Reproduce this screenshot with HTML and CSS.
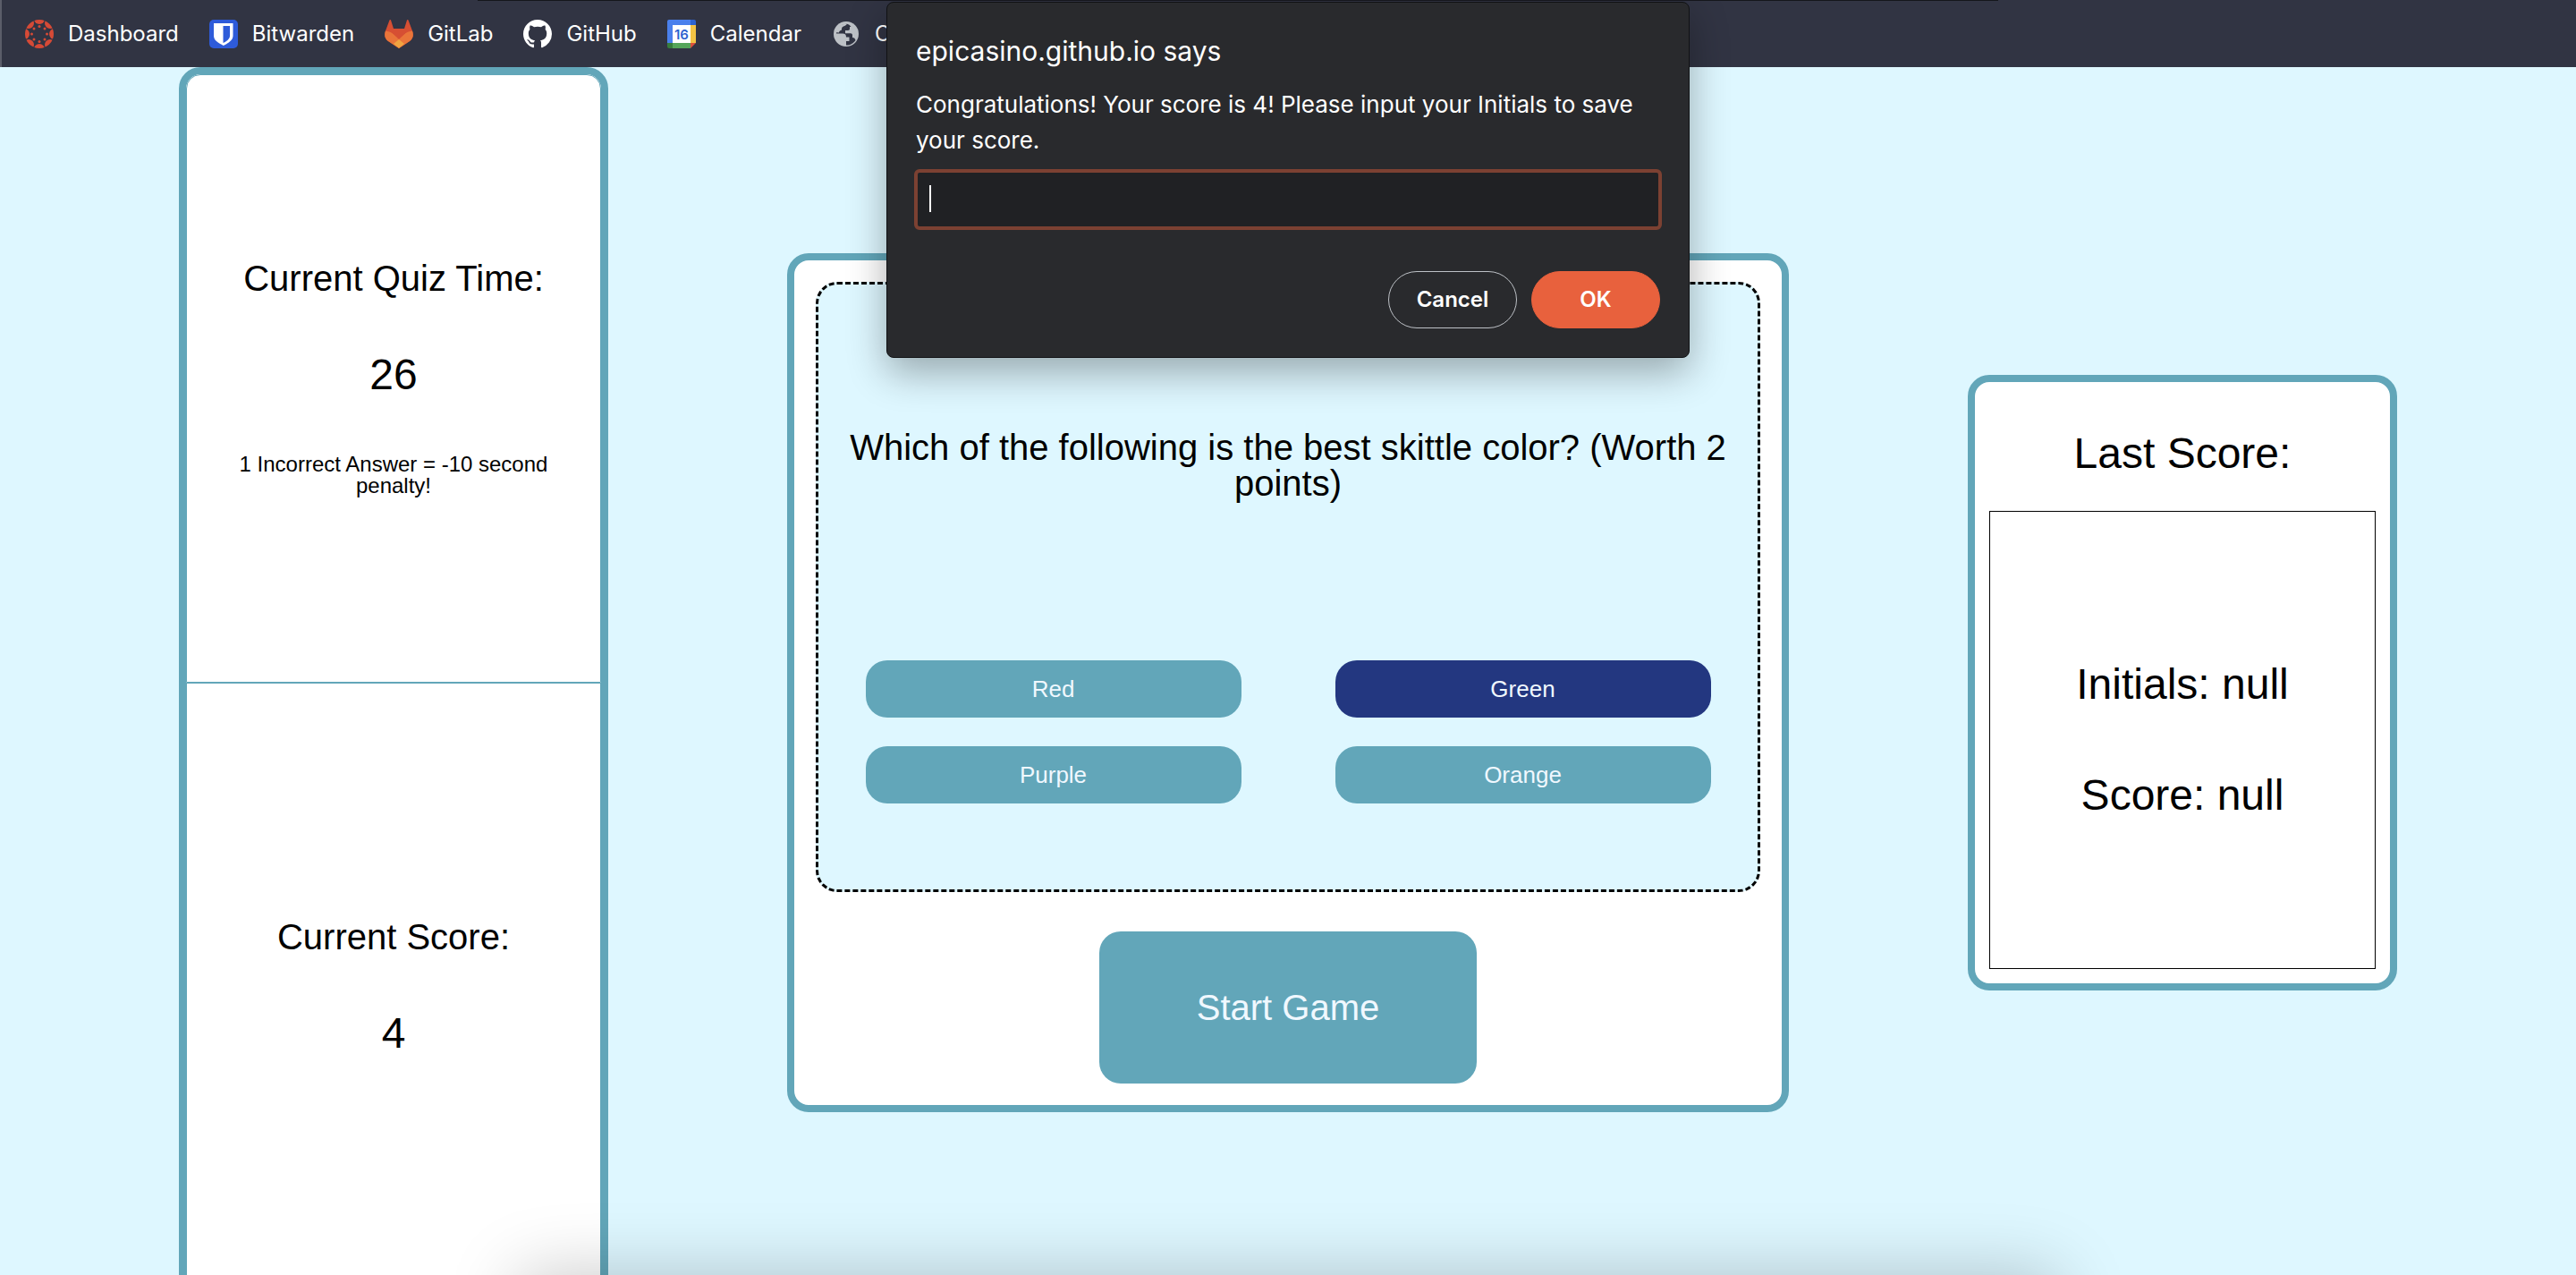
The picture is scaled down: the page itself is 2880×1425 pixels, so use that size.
FILE: index.html
```html
<!DOCTYPE html>
<html lang="en">
<head>
<meta charset="utf-8">
<title>Quiz</title>
<link rel="stylesheet" href="styles.css">
</head>
<body>
<nav class="bookmarks" aria-label="Bookmarks">
  <a class="bookmark" href="#">
    <svg class="icon" viewBox="0 0 32 32" aria-hidden="true">
      <defs><clipPath id="disc"><circle cx="16" cy="16" r="16"/></clipPath></defs>
      <g fill="#d64a36" clip-path="url(#disc)">
        <circle cx="16" cy="-1" r="6"/><circle cx="28" cy="4" r="6"/><circle cx="33" cy="16" r="6"/><circle cx="28" cy="28" r="6"/>
        <circle cx="16" cy="33" r="6"/><circle cx="4" cy="28" r="6"/><circle cx="-1" cy="16" r="6"/><circle cx="4" cy="4" r="6"/>
        <circle cx="16" cy="7.500" r="1.500"/><circle cx="22" cy="10" r="1.500"/><circle cx="24.500" cy="16" r="1.500"/><circle cx="22" cy="22" r="1.500"/>
        <circle cx="16" cy="24.500" r="1.500"/><circle cx="10" cy="22" r="1.500"/><circle cx="7.500" cy="16" r="1.500"/><circle cx="10" cy="10" r="1.500"/>
      </g>
    </svg>
    <span>Dashboard</span>
  </a>
  <a class="bookmark" href="#">
    <svg class="icon" viewBox="0 0 32 32" aria-hidden="true">
      <rect width="32" height="32" rx="5" fill="#2e5bd9"/>
      <path fill="#fff" d="M5 4h21.500v14c0 5-5 8-10.700 11C10 26 5 23 5 18z"/>
      <path fill="#2e5bd9" d="M15.500 7H23v11c0 3.500-3 5.500-7.500 8z"/>
    </svg>
    <span>Bitwarden</span>
  </a>
  <a class="bookmark" href="#">
    <svg class="icon" viewBox="0 0 32 32" aria-hidden="true">
      <path fill="#d64f33" d="M5.500.5 1 12.500c-2 6 0 9 3 11.500l12 8 12-8c3-2.500 5-5.500 3-11.500L26.500.5c-.4-.8-1.200-.6-1.500 0L22 10H10L7 .5C6.700-.1 5.900-.3 5.500.5z"/>
      <path fill="#e9753a" d="M1 12.500c3 .3 6 1.500 8.500 3.300L16 20.500l6.500-4.700c2.500-1.800 5.500-3 8.500-3.300 2 6 0 9-3 11.500l-12 8-12-8c-3-2.500-5-5.500-3-11.500z"/>
      <path fill="#d64f33" d="M9.500 15.800 16 22l6.500-6.200L24 13H8z"/>
      <path fill="#f0a441" d="m16 22-6 5 6 4.800 6-4.800z"/>
    </svg>
    <span>GitLab</span>
  </a>
  <a class="bookmark" href="#">
    <svg class="icon" viewBox="0 0 16 16" aria-hidden="true">
      <path fill="#fff" d="M8 0C3.580 0 0 3.580 0 8c0 3.540 2.290 6.530 5.470 7.590.4.070.55-.17.55-.38 0-.19-.01-.82-.01-1.490-2.010.37-2.530-.49-2.690-.94-.09-.23-.48-.94-.82-1.130-.28-.15-.68-.52-.01-.53.63-.01 1.080.58 1.230.82.72 1.210 1.870.87 2.330.66.07-.52.28-.87.51-1.070-1.780-.2-3.640-.89-3.640-3.950 0-.87.31-1.590.82-2.150-.08-.2-.36-1.020.08-2.120 0 0 .67-.21 2.200.82.64-.18 1.320-.27 2-.27s1.360.09 2 .27c1.530-1.040 2.200-.82 2.200-.82.44 1.100.16 1.920.08 2.120.51.56.82 1.270.82 2.150 0 3.070-1.870 3.750-3.650 3.950.29.25.54.73.54 1.480 0 1.070-.01 1.930-.01 2.200 0 .21.15.46.55.38A8.010 8.010 0 0 0 16 8c0-4.420-3.580-8-8-8z"/>
    </svg>
    <span>GitHub</span>
  </a>
  <a class="bookmark" href="#">
    <svg class="icon" viewBox="0 0 32 32" aria-hidden="true">
      <path fill="#4a80ec" d="M0 2a2 2 0 0 1 2-2h24v6H6v20H0z"/>
      <path fill="#2c62cf" d="M26 0h4a2 2 0 0 1 2 2v4h-6z"/>
      <path fill="#f3c344" d="M26 6h6v20h-6z"/>
      <path fill="#fff" d="M6 6h20v20H6z"/>
      <path fill="#55a55a" d="M6 26h20v6H6z"/>
      <path fill="#377d3d" d="M0 26h6v6H2a2 2 0 0 1-2-2z"/>
      <path fill="#db4f3c" d="M26 26h6l-6 6z"/>
      <text class="calendar-day" x="16" y="22" text-anchor="middle">16</text>
    </svg>
    <span>Calendar</span>
  </a>
  <a class="bookmark" href="#">
    <svg class="icon" viewBox="0 0 32 32" aria-hidden="true">
      <circle cx="16" cy="16" r="14" fill="#bdc1c6"/>
      <path fill="#313443" d="M17 4.800C11 4.500 5.500 9 5 15.500h7c3 0 4 1.500 4 4h3.500V24H16v4.500c5 0 8-2 10.500-5.500-.5-2-1.500-3-3.500-3V17.500c0-1.500-.8-2.200-2-2.200h-6V12h3c1.500 0 2-.8 2-2V8h1.500C20 6.500 19 5 17 4.800z"/>
      <path fill="#bdc1c6" d="M4 14C5 8 10 4.500 17 4.500c-1 2-2.500 2.500-4 3-2 .8-2 2-2 4-2 .5-3 1.500-3 3z"/>
    </svg>
    <span>Co</span>
  </a>
</nav>

<main class="quiz">
  <section class="panel status">
    <div class="status-block">
      <h2 class="label">Current Quiz Time:</h2>
      <p class="figure">26</p>
      <p class="note">1 Incorrect Answer = -10 second penalty!</p>
    </div>
    <div class="status-block">
      <h2 class="label">Current Score:</h2>
      <p class="figure">4</p>
    </div>
  </section>

  <section class="panel game">
    <div class="card">
      <h1 class="question">Which of the following is the best skittle color? (Worth 2 points)</h1>
      <div class="answers">
        <button class="answer" type="button">Red</button>
        <button class="answer selected" type="button">Green</button>
        <button class="answer" type="button">Purple</button>
        <button class="answer" type="button">Orange</button>
      </div>
    </div>
    <button class="start" type="button">Start Game</button>
  </section>

  <section class="panel last">
    <h2 class="last-title">Last Score:</h2>
    <div class="last-box">
      <p>Initials: null</p>
      <p>Score: null</p>
    </div>
  </section>
</main>

<form class="dialog" role="dialog" aria-labelledby="dialog-title">
  <h2 class="dialog-title" id="dialog-title">epicasino.github.io says</h2>
  <label class="dialog-text" for="initials">Congratulations! Your score is 4! Please input your Initials to save your score.</label>
  <div class="field">
    <input class="field-input" id="initials" type="text" autocomplete="off">
    <span class="caret"></span>
  </div>
  <div class="actions">
    <button class="action" type="button">Cancel</button>
    <button class="action primary" type="button">OK</button>
  </div>
</form>

<div class="top-edge"></div>
<div class="dock-shadow"></div>
</body>
</html>
```

FILE: styles.css
```css
* {
  box-sizing: border-box;
  margin: 0;
}

html {
  height: 100%;
  overflow: hidden;
}

body {
  position: relative;
  height: 100%;
  overflow: hidden;
  background: #def7ff;
  color: #000;
  font-family: "Liberation Sans", Arial, sans-serif;
}

h1, h2 {
  font-weight: 400;
}

button, input {
  font: inherit;
}

.bookmarks {
  display: flex;
  align-items: center;
  gap: 34px;
  height: 75px;
  padding: 0 28px 0 26px;
  border-left: 2px solid #5b5d69;
  background: #313443;
}

.bookmark {
  display: flex;
  align-items: center;
  gap: 16px;
  color: #fff;
  font: 400 24px/32px Inter, sans-serif;
  text-decoration: none;
}

.icon {
  flex: none;
  width: 32px;
  height: 32px;
}

.calendar-day {
  fill: #2c62cf;
  font: 600 15px Inter, sans-serif;
}

.quiz {
  display: grid;
  grid-template-columns: 6fr 14fr 6fr;
  align-items: center;
  gap: 200px;
  padding: 0 200px;
}

.panel {
  border: 8px solid #62a6b9;
  border-radius: 24px;
  background: #fff;
  text-align: center;
}

.status-block {
  display: flex;
  flex-direction: column;
  justify-content: center;
  gap: 64px;
  min-height: 680px;
  padding: 0 48px;
  border: 1px solid #62a6b9;
}

.status-block:first-child {
  border-radius: 16px 16px 0 0;
}

.label, .question, .start {
  font-size: 40px;
  line-height: 40px;
}

.figure, .last {
  font-size: 48px;
  line-height: 48px;
}

.note {
  font-size: 24px;
  line-height: 24px;
}

.game {
  padding: 24px;
}

.card {
  border: 3px dashed #000;
  border-radius: 24px;
  background: #def7ff;
}

.question {
  display: flex;
  align-items: center;
  justify-content: center;
  min-height: 404px;
  padding: 0 24px;
}

.answers {
  display: grid;
  grid-template-columns: 1fr 1fr;
  gap: 32px 105px;
  padding: 16px 5% 96px;
}

.answer, .start {
  border: 0;
  border-radius: 24px;
  background: #62a6b9;
  color: #f0f8ff;
}

.answer {
  height: 64px;
  font-size: 26px;
}

.selected {
  background: #233780;
}

.start {
  width: 40%;
  height: 170px;
  margin-top: 44px;
}

.last {
  padding: 16px;
}

.last-title {
  font-size: 48px;
  line-height: 128px;
}

.last-box {
  display: flex;
  flex-direction: column;
  justify-content: center;
  gap: 76px;
  min-height: 512px;
  border: 1px solid #000;
}

.dialog {
  position: absolute;
  top: 2px;
  left: 50%;
  width: 898px;
  margin-left: -449px;
  padding: 36px 32px 32px;
  border: 1px solid #111214;
  border-radius: 8px;
  background: #292a2d;
  box-shadow: 0 16px 44px rgba(0, 0, 0, .32);
  color: #fff;
  font: 400 26px/40px Inter, sans-serif;
}

.dialog-title {
  font-size: 30px;
  line-height: 36px;
}

.dialog-text {
  display: block;
  margin-top: 22px;
}

.field {
  position: relative;
  margin: 12px -2px 0;
}

.field-input {
  display: block;
  width: 100%;
  height: 68px;
  padding: 0 16px;
  border: 4px solid #7c4132;
  border-radius: 6px;
  outline: 0;
  background: #202124;
  color: #fff;
}

.caret {
  position: absolute;
  top: 18px;
  left: 17px;
  width: 2px;
  height: 30px;
  background: #fff;
}

.actions {
  display: flex;
  justify-content: flex-end;
  gap: 16px;
  margin-top: 46px;
}

.action {
  width: 144px;
  height: 64px;
  border: 1px solid #bdc1c6;
  border-radius: 32px;
  background: transparent;
  color: #fff;
  font-size: 24px;
  font-weight: 600;
}

.primary {
  border-color: #e8613d;
  background: #e8613d;
}

.top-edge {
  position: absolute;
  top: 0;
  left: 534px;
  right: 646px;
  height: 1px;
  background: #15161c;
}

.dock-shadow {
  position: absolute;
  top: 100%;
  left: 580px;
  right: 580px;
  height: 120px;
  box-shadow: 0 0 80px rgba(0, 0, 0, .22);
}
```
